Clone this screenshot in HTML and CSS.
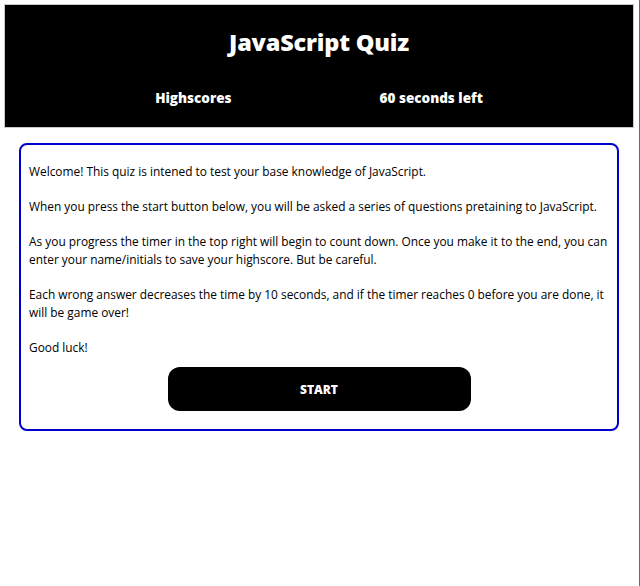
FILE: index.html
```html
<!DOCTYPE html>
<html lang="en">
<head>
<meta charset="utf-8">
<title>JavaScript Quiz</title>
<link rel="stylesheet" href="styles.css">
</head>
<body>
<header class="site-header">
  <h1 class="title">JavaScript Quiz</h1>
  <nav class="nav">
    <a class="nav-link" href="#">Highscores</a>
    <span class="timer">60 seconds left</span>
  </nav>
</header>
<main class="card">
  <p>Welcome! This quiz is intened to test your base knowledge of JavaScript.</p>
  <p>When you press the start button below, you will be asked a series of questions pretaining to JavaScript.</p>
  <p>As you progress the timer in the top right will begin to count down. Once you make it to the end, you can enter your name/initials to save your highscore. But be careful.</p>
  <p>Each wrong answer decreases the time by 10 seconds, and if the timer reaches 0 before you are done, it will be game over!</p>
  <p>Good luck!</p>
  <div class="actions">
    <button class="start-btn" type="button">START</button>
  </div>
</main>
</body>
</html>
```

FILE: styles.css
```css
html {
  border-right: 1px solid #6a6a6a;
  min-height: 100%;
  box-sizing: border-box;
}
body {
  margin: 0;
  padding: 4px 5px 0 4px;
  font-family: "Open Sans", "DejaVu Sans", sans-serif;
  color: #000;
  background: #fff;
}
.site-header {
  background: #000;
  border: 1px solid #c8c8c8;
  height: 124px;
  box-sizing: border-box;
  display: flex;
  flex-direction: column;
  align-items: center;
  color: #fff;
}
.title {
  margin: 21px 0 0;
  font-size: 23.5px;
  line-height: 32px;
  font-weight: 800;
  letter-spacing: -0.2px;
}
.nav {
  display: flex;
  gap: 148px;
  margin-top: 30px;
  font-size: 13.5px;
  line-height: 20px;
  font-weight: 800;
}
.nav-link {
  color: #fff;
  text-decoration: none;
}
.card {
  margin: 15px 15px 0 15px;
  border: 2px solid #0000cc;
  border-radius: 8px;
  padding: 0 6px 18px 8px;
  font-size: 11.9px;
  line-height: 18px;
}
.card p {
  margin: 17px 0;
}
.card p:last-of-type {
  margin-bottom: 11px;
}
.actions {
  display: flex;
  justify-content: center;
}
.start-btn {
  width: 303px;
  height: 44px;
  background: #000;
  color: #fff;
  border: none;
  border-radius: 12px;
  font-family: "Open Sans", sans-serif;
  font-weight: 800;
  font-size: 12px;
  margin: 0 2px 0 0;
}
```
